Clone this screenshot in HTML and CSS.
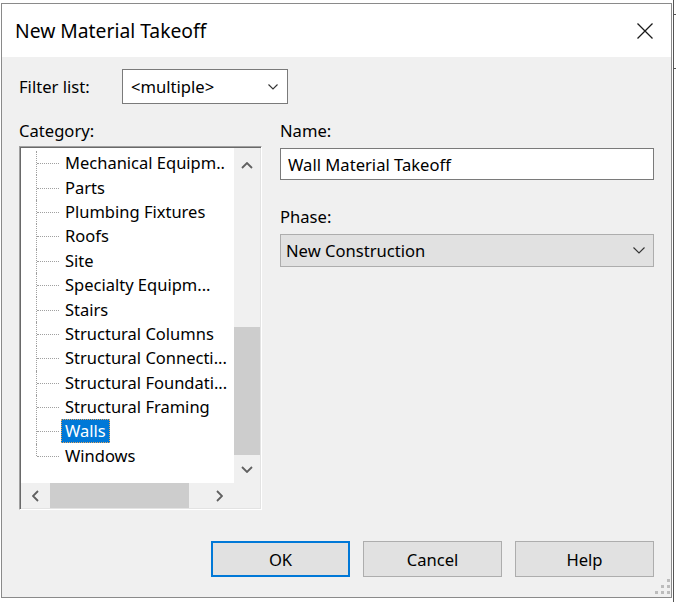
FILE: index.html
```html
<!DOCTYPE html>
<html>
<head>
<meta charset="utf-8">
<title>New Material Takeoff</title>
<link rel="stylesheet" href="styles.css">
</head>
<body>
<div class="screen">
  <div class="dialog">
    <div class="titlebar">
      <span class="title">New Material Takeoff</span>
      <svg class="close" width="16" height="16" viewBox="0 0 16 16"><path d="M0.5 0.5 L15.5 15.5 M15.5 0.5 L0.5 15.5" stroke="#1a1a1a" stroke-width="1.3" fill="none"/></svg>
    </div>
    <div class="content">
      <div class="filter-row">
        <span class="label filter-label">Filter list:</span>
        <div class="combo">
          <span class="combo-text">&lt;multiple&gt;</span>
          <svg class="chev" width="10" height="6" viewBox="0 0 10 6"><polyline points="0.5,0.5 5,5 9.5,0.5" stroke="#333" stroke-width="1.1" fill="none"/></svg>
        </div>
      </div>
      <div class="main-row">
        <div class="left-col">
          <div class="label cat-label">Category:</div>
          <div class="tree">
            <div class="tree-view">
              <ul class="tree-list">
                <li class="tree-item"><span class="tree-text">Mechanical Equipm..</span></li>
                <li class="tree-item"><span class="tree-text">Parts</span></li>
                <li class="tree-item"><span class="tree-text">Plumbing Fixtures</span></li>
                <li class="tree-item"><span class="tree-text">Roofs</span></li>
                <li class="tree-item"><span class="tree-text">Site</span></li>
                <li class="tree-item"><span class="tree-text">Specialty Equipm...</span></li>
                <li class="tree-item"><span class="tree-text">Stairs</span></li>
                <li class="tree-item"><span class="tree-text">Structural Columns</span></li>
                <li class="tree-item"><span class="tree-text">Structural Connecti...</span></li>
                <li class="tree-item"><span class="tree-text">Structural Foundati...</span></li>
                <li class="tree-item"><span class="tree-text">Structural Framing</span></li>
                <li class="tree-item"><span class="tree-text selected">Walls</span></li>
                <li class="tree-item"><span class="tree-text">Windows</span></li>
              </ul>
            </div>
            <div class="vscroll">
              <div class="sb-btn vs-up"><svg width="12" height="7" viewBox="0 0 12 7"><polyline points="1,6 6,1 11,6" stroke="#606060" stroke-width="1.8" fill="none"/></svg></div>
              <div class="vs-track"><div class="vs-thumb"></div></div>
              <div class="sb-btn vs-down"><svg width="12" height="7" viewBox="0 0 12 7"><polyline points="1,1 6,6 11,1" stroke="#606060" stroke-width="1.8" fill="none"/></svg></div>
            </div>
            <div class="hscroll">
              <div class="sb-btn hs-left"><svg width="7" height="12" viewBox="0 0 7 12"><polyline points="6,1 1,6 6,11" stroke="#606060" stroke-width="1.8" fill="none"/></svg></div>
              <div class="hs-track"><div class="hs-thumb"></div></div>
              <div class="sb-btn hs-right"><svg width="7" height="12" viewBox="0 0 7 12"><polyline points="1,1 6,6 1,11" stroke="#606060" stroke-width="1.8" fill="none"/></svg></div>
            </div>
            <div class="corner"></div>
          </div>
        </div>
        <div class="right-col">
          <div class="label name-label">Name:</div>
          <div class="textbox">Wall Material Takeoff</div>
          <div class="label phase-label">Phase:</div>
          <div class="select">
            <span>New Construction</span>
            <svg class="chev" width="12" height="7" viewBox="0 0 12 7"><polyline points="0.5,0.5 6,6 11.5,0.5" stroke="#333" stroke-width="1.1" fill="none"/></svg>
          </div>
        </div>
      </div>
      <div class="buttons">
        <div class="btn btn-default">OK</div>
        <div class="btn">Cancel</div>
        <div class="btn">Help</div>
      </div>
    </div>
    <div class="grip">
      <i class="off"></i><i class="off"></i><i></i>
      <i class="off"></i><i></i><i></i>
      <i></i><i></i><i></i>
    </div>
  </div>
  <div class="edge">
    <div class="tick t1"></div>
    <div class="tick t2"></div>
  </div>
</div>
</body>
</html>
```

FILE: styles.css
```css
html, body {
  margin: 0;
  padding: 0;
  background: #ffffff;
}

body {
  font-family: "Noto Sans", "Open Sans", sans-serif;
  color: #000;
}

.screen {
  display: flex;
  width: 676px;
  height: 602px;
  overflow: hidden;
}

.dialog {
  position: relative;
  flex: none;
  margin: 3px 0 0 1px;
  width: 671px;
  height: 595px;
  box-sizing: border-box;
  border: 1px solid #8a8a8a;
  background: #f0f0f0;
  display: flex;
  flex-direction: column;
}

/* Title bar */
.titlebar {
  flex: none;
  height: 53px;
  background: #ffffff;
  display: flex;
  align-items: center;
  padding-left: 13px;
}

.title {
  font-size: 19.3px;
  color: #000;
}

.close {
  margin-left: auto;
  margin-right: 18px;
}

/* Content */
.content {
  flex: 1;
  display: flex;
  flex-direction: column;
  padding: 12px 17px 0 17px;
}

.label {
  font-size: 16.6px;
  line-height: 22px;
}

.filter-row {
  display: flex;
  align-items: center;
  height: 35px;
}

.filter-label {
  width: 103px;
}

.combo {
  width: 166px;
  height: 35px;
  box-sizing: border-box;
  border: 1px solid #7a7a7a;
  background: #ffffff;
  display: flex;
  align-items: center;
  justify-content: space-between;
  padding: 0 9px 0 8px;
  font-size: 16.6px;
}

.main-row {
  display: flex;
  margin-top: 16px;
}

.left-col {
  width: 243px;
  display: flex;
  flex-direction: column;
}

.cat-label {
  height: 26px;
}

/* Tree */
.tree {
  width: 243px;
  height: 364px;
  box-sizing: border-box;
  border-style: solid;
  border-width: 1px;
  border-color: #a0a0a0 #ffffff #ffffff #a0a0a0;
  box-shadow: inset 1px 1px 0 #696969, inset -1px -1px 0 #e3e3e3;
  padding: 1px;
  display: grid;
  grid-template-columns: 213px 26px;
  grid-template-rows: 335px 25px;
}

.tree-view {
  background: #ffffff;
  overflow: hidden;
}

.tree-list {
  list-style: none;
  margin: 0;
  padding: 3px 0 0 15px;
}

.tree-item {
  position: relative;
  height: 24.4px;
  display: flex;
  align-items: center;
  font-size: 16.5px;
  white-space: nowrap;
}

.tree-item::before {
  content: "";
  position: absolute;
  left: 0;
  top: 0;
  bottom: 0;
  border-left: 1px dotted #a0a0a0;
}

.tree-item:last-child::before {
  bottom: 50%;
}

.tree-item::after {
  content: "";
  position: absolute;
  left: 1px;
  top: 50%;
  width: 22px;
  border-top: 1px dotted #a0a0a0;
}

.tree-text {
  margin-left: 25px;
  padding: 0 3px;
  line-height: 22px;
  border: 1px solid transparent;
}

.tree-text.selected {
  background: #0078d7;
  color: #ffffff;
  border: 1px dotted #e8a860;
}

/* Scrollbars */
.vscroll {
  background: #f0f0f0;
  display: flex;
  flex-direction: column;
}

.sb-btn {
  display: flex;
  align-items: center;
  justify-content: center;
}

.vs-up {
  height: 34px;
}

.vs-track {
  flex: 1;
  padding-top: 145px;
}

.vs-thumb {
  height: 128px;
  background: #cdcdcd;
}

.vs-down {
  height: 27px;
}

.hscroll {
  background: #f0f0f0;
  display: flex;
}

.hs-left {
  width: 29px;
}

.hs-track {
  flex: 1;
}

.hs-thumb {
  width: 139px;
  height: 100%;
  background: #cdcdcd;
}

.hs-right {
  width: 29px;
}

.corner {
  background: #f0f0f0;
}

/* Right column */
.right-col {
  margin-left: 18px;
  width: 376px;
  display: flex;
  flex-direction: column;
}

.name-label {
  height: 28px;
}

.textbox {
  height: 32px;
  box-sizing: border-box;
  border: 1px solid #7a7a7a;
  background: #ffffff;
  display: flex;
  align-items: center;
  padding-left: 7px;
  font-size: 16.6px;
}

.phase-label {
  margin-top: 26px;
  height: 28px;
}

.select {
  height: 33px;
  box-sizing: border-box;
  border: 1px solid #adadad;
  background: #e1e1e1;
  display: flex;
  align-items: center;
  justify-content: space-between;
  padding: 0 8px 0 5px;
  font-size: 16.6px;
}

/* Buttons */
.buttons {
  display: flex;
  justify-content: flex-end;
  gap: 13px;
  margin-top: 31px;
}

.btn {
  width: 139px;
  height: 36px;
  box-sizing: border-box;
  border: 1px solid #adadad;
  background: #e1e1e1;
  display: flex;
  align-items: center;
  justify-content: center;
  font-size: 16.6px;
}

.btn-default {
  border: 2px solid #0078d7;
}

/* Size grip */
.grip {
  position: absolute;
  right: 1px;
  bottom: 3px;
  display: grid;
  grid-template-columns: repeat(3, 3px);
  grid-template-rows: repeat(3, 3px);
  gap: 3px;
}

.grip i {
  display: block;
  background: #bcbcbc;
}

.grip i.off {
  background: transparent;
}

/* Background drawing edge */
.edge {
  flex: 1;
  margin-left: 1px;
  border-left: 1px solid #555;
  display: flex;
  flex-direction: column;
}

.tick {
  width: 3px;
  height: 1px;
  background: #555;
}

.t1 {
  margin-top: 14px;
}

.t2 {
  margin-top: 53px;
}
```
